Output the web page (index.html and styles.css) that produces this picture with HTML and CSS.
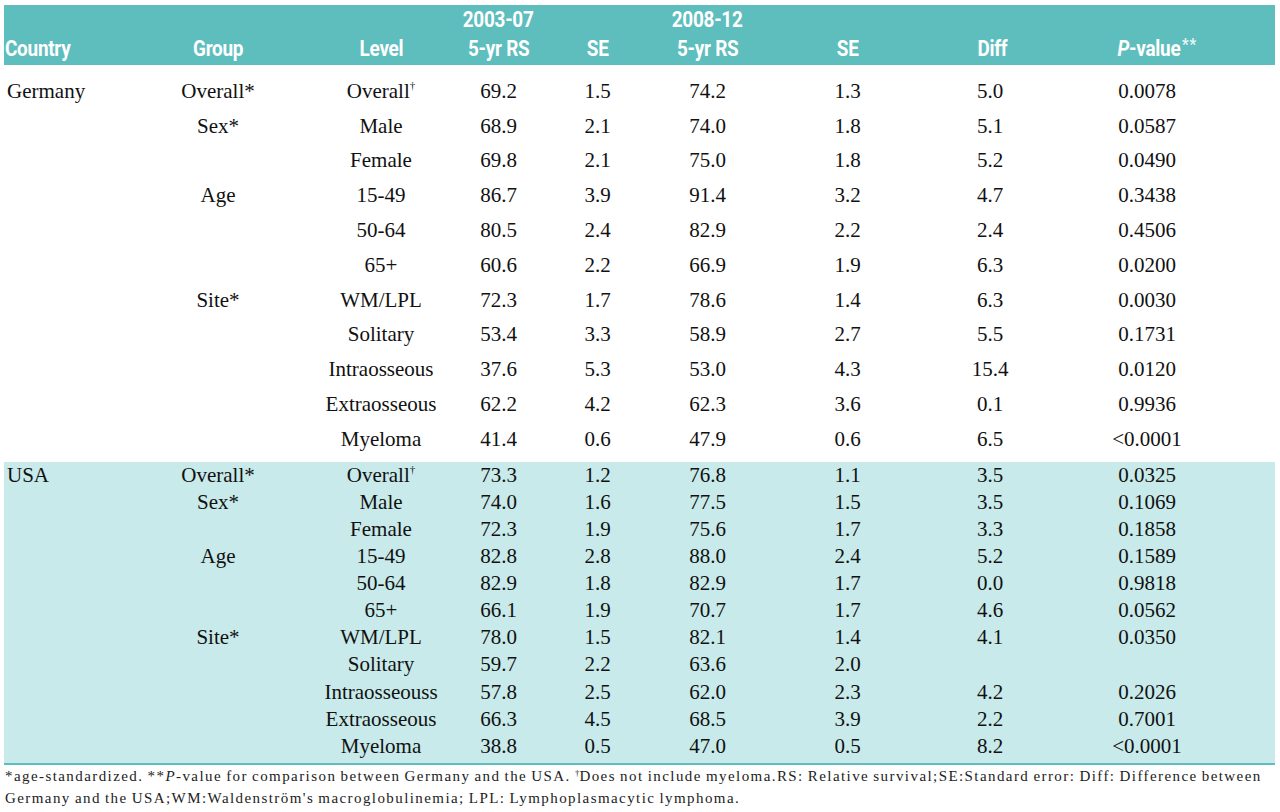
FILE: index.html
```html
<!DOCTYPE html>
<html lang="en">
<head>
<meta charset="utf-8">
<title>Survival table</title>
<link rel="stylesheet" href="styles.css">
</head>
<body>
<div class="tbl">
  <div class="head">
    <div class="row">
      <div class="c country"><span class="l2">Country</span></div>
      <div class="c group"><span class="l2">Group</span></div>
      <div class="c level"><span class="l2">Level</span></div>
      <div class="c rs1"><span>2003-07</span><span>5-yr RS</span></div>
      <div class="c se1"><span class="l2">SE</span></div>
      <div class="c rs2"><span>2008-12</span><span>5-yr RS</span></div>
      <div class="c se2"><span class="l2">SE</span></div>
      <div class="c diff"><span class="l2">Diff</span></div>
      <div class="c pv"><span class="l2"><i>P</i>-value<sup class="ast">**</sup></span></div>
    </div>
  </div>

  <div class="sec de">
    <div class="row"><div class="c country">Germany</div><div class="c group">Overall*</div><div class="c level">Overall<sup>†</sup></div><div class="c rs1">69.2</div><div class="c se1">1.5</div><div class="c rs2">74.2</div><div class="c se2">1.3</div><div class="c diff">5.0</div><div class="c pv">0.0078</div></div>
    <div class="row"><div class="c country"></div><div class="c group">Sex*</div><div class="c level">Male</div><div class="c rs1">68.9</div><div class="c se1">2.1</div><div class="c rs2">74.0</div><div class="c se2">1.8</div><div class="c diff">5.1</div><div class="c pv">0.0587</div></div>
    <div class="row"><div class="c country"></div><div class="c group"></div><div class="c level">Female</div><div class="c rs1">69.8</div><div class="c se1">2.1</div><div class="c rs2">75.0</div><div class="c se2">1.8</div><div class="c diff">5.2</div><div class="c pv">0.0490</div></div>
    <div class="row"><div class="c country"></div><div class="c group">Age</div><div class="c level">15-49</div><div class="c rs1">86.7</div><div class="c se1">3.9</div><div class="c rs2">91.4</div><div class="c se2">3.2</div><div class="c diff">4.7</div><div class="c pv">0.3438</div></div>
    <div class="row"><div class="c country"></div><div class="c group"></div><div class="c level">50-64</div><div class="c rs1">80.5</div><div class="c se1">2.4</div><div class="c rs2">82.9</div><div class="c se2">2.2</div><div class="c diff">2.4</div><div class="c pv">0.4506</div></div>
    <div class="row"><div class="c country"></div><div class="c group"></div><div class="c level">65+</div><div class="c rs1">60.6</div><div class="c se1">2.2</div><div class="c rs2">66.9</div><div class="c se2">1.9</div><div class="c diff">6.3</div><div class="c pv">0.0200</div></div>
    <div class="row"><div class="c country"></div><div class="c group">Site*</div><div class="c level">WM/LPL</div><div class="c rs1">72.3</div><div class="c se1">1.7</div><div class="c rs2">78.6</div><div class="c se2">1.4</div><div class="c diff">6.3</div><div class="c pv">0.0030</div></div>
    <div class="row"><div class="c country"></div><div class="c group"></div><div class="c level">Solitary</div><div class="c rs1">53.4</div><div class="c se1">3.3</div><div class="c rs2">58.9</div><div class="c se2">2.7</div><div class="c diff">5.5</div><div class="c pv">0.1731</div></div>
    <div class="row"><div class="c country"></div><div class="c group"></div><div class="c level">Intraosseous</div><div class="c rs1">37.6</div><div class="c se1">5.3</div><div class="c rs2">53.0</div><div class="c se2">4.3</div><div class="c diff">15.4</div><div class="c pv">0.0120</div></div>
    <div class="row"><div class="c country"></div><div class="c group"></div><div class="c level">Extraosseous</div><div class="c rs1">62.2</div><div class="c se1">4.2</div><div class="c rs2">62.3</div><div class="c se2">3.6</div><div class="c diff">0.1</div><div class="c pv">0.9936</div></div>
    <div class="row"><div class="c country"></div><div class="c group"></div><div class="c level">Myeloma</div><div class="c rs1">41.4</div><div class="c se1">0.6</div><div class="c rs2">47.9</div><div class="c se2">0.6</div><div class="c diff">6.5</div><div class="c pv">&lt;0.0001</div></div>
  </div>

  <div class="sec us">
    <div class="row"><div class="c country">USA</div><div class="c group">Overall*</div><div class="c level">Overall<sup>†</sup></div><div class="c rs1">73.3</div><div class="c se1">1.2</div><div class="c rs2">76.8</div><div class="c se2">1.1</div><div class="c diff">3.5</div><div class="c pv">0.0325</div></div>
    <div class="row"><div class="c country"></div><div class="c group">Sex*</div><div class="c level">Male</div><div class="c rs1">74.0</div><div class="c se1">1.6</div><div class="c rs2">77.5</div><div class="c se2">1.5</div><div class="c diff">3.5</div><div class="c pv">0.1069</div></div>
    <div class="row"><div class="c country"></div><div class="c group"></div><div class="c level">Female</div><div class="c rs1">72.3</div><div class="c se1">1.9</div><div class="c rs2">75.6</div><div class="c se2">1.7</div><div class="c diff">3.3</div><div class="c pv">0.1858</div></div>
    <div class="row"><div class="c country"></div><div class="c group">Age</div><div class="c level">15-49</div><div class="c rs1">82.8</div><div class="c se1">2.8</div><div class="c rs2">88.0</div><div class="c se2">2.4</div><div class="c diff">5.2</div><div class="c pv">0.1589</div></div>
    <div class="row"><div class="c country"></div><div class="c group"></div><div class="c level">50-64</div><div class="c rs1">82.9</div><div class="c se1">1.8</div><div class="c rs2">82.9</div><div class="c se2">1.7</div><div class="c diff">0.0</div><div class="c pv">0.9818</div></div>
    <div class="row"><div class="c country"></div><div class="c group"></div><div class="c level">65+</div><div class="c rs1">66.1</div><div class="c se1">1.9</div><div class="c rs2">70.7</div><div class="c se2">1.7</div><div class="c diff">4.6</div><div class="c pv">0.0562</div></div>
    <div class="row"><div class="c country"></div><div class="c group">Site*</div><div class="c level">WM/LPL</div><div class="c rs1">78.0</div><div class="c se1">1.5</div><div class="c rs2">82.1</div><div class="c se2">1.4</div><div class="c diff">4.1</div><div class="c pv">0.0350</div></div>
    <div class="row"><div class="c country"></div><div class="c group"></div><div class="c level">Solitary</div><div class="c rs1">59.7</div><div class="c se1">2.2</div><div class="c rs2">63.6</div><div class="c se2">2.0</div><div class="c diff"></div><div class="c pv"></div></div>
    <div class="row"><div class="c country"></div><div class="c group"></div><div class="c level">Intraosseouss</div><div class="c rs1">57.8</div><div class="c se1">2.5</div><div class="c rs2">62.0</div><div class="c se2">2.3</div><div class="c diff">4.2</div><div class="c pv">0.2026</div></div>
    <div class="row"><div class="c country"></div><div class="c group"></div><div class="c level">Extraosseous</div><div class="c rs1">66.3</div><div class="c se1">4.5</div><div class="c rs2">68.5</div><div class="c se2">3.9</div><div class="c diff">2.2</div><div class="c pv">0.7001</div></div>
    <div class="row"><div class="c country"></div><div class="c group"></div><div class="c level">Myeloma</div><div class="c rs1">38.8</div><div class="c se1">0.5</div><div class="c rs2">47.0</div><div class="c se2">0.5</div><div class="c diff">8.2</div><div class="c pv">&lt;0.0001</div></div>
  </div>

  <div class="foot">*age-standardized. **<i>P</i>-value for comparison between Germany and the USA. <sup>†</sup>Does not include myeloma.RS: Relative survival;SE:Standard error: Diff: Difference between<br>Germany and the USA;WM:Waldenström's macroglobulinemia; LPL: Lymphoplasmacytic lymphoma.</div>
</div>
</body>
</html>
```
FILE: styles.css
```css
html, body {
  margin: 0;
  padding: 0;
  background: #ffffff;
}

.tbl {
  width: 1271px;
  margin: 5px 0 0 4px;
  font-family: "Liberation Serif", "Times New Roman", serif;
  color: #111111;
}

.row {
  display: grid;
  grid-template-columns: 146px 140px 150px 115px 85px 135px 145px 140px 215px;
  align-items: center;
}

.c {
  text-align: center;
  white-space: nowrap;
}

.c.country { text-align: left; padding-left: 3px; }
.c.group { padding-right: 4px; }
.c.level { padding-left: 32px; }
.c.rs1 { padding-left: 2px; }
.c.pv { padding-right: 41px; }

/* Header band */
.head {
  background: #5ebdbd;
  height: 60px;
}
.head .row {
  height: 60px;
  align-items: stretch;
}
.head .c {
  display: flex;
  flex-direction: column;
  justify-content: flex-end;
  align-items: center;
  padding-bottom: 3px;
  font-family: Roboto, "Liberation Sans", sans-serif;
  font-weight: bold;
  font-size: 22px;
  line-height: 29px;
  color: #ffffff;
  letter-spacing: -0.3px;
}
.head .c span {
  display: block;
  transform: scaleX(0.86);
}
.head .c.country { align-items: flex-start; padding-left: 1px; }
.head .c.country span { transform-origin: left center; }
.head .c.pv { padding-right: 21px; }
.head .c.diff { padding-left: 4px; }
.head .ast {
  font-size: 17px;
  vertical-align: 6px;
  line-height: 0;
  color: #e9f7f7;
  margin-left: 2px;
  letter-spacing: 1px;
}

/* Body sections */
.sec {
  font-size: 21px;
}
.sec .row {
  height: 34.8px;
}
.sec.de {
  padding: 9px 0 5px;
}
.sec.us {
  background: #c8eaea;
  padding: 0 0 3px;
  border-bottom: 2px solid #5ebdbd;
}
.sec.us .row {
  height: 27.1px;
}

.sec sup {
  font-size: 11px;
  vertical-align: 9px;
  line-height: 0;
}

/* Footnote */
.foot {
  font-family: "Liberation Serif", "Times New Roman", serif;
  font-size: 15px;
  line-height: 22px;
  letter-spacing: 1.42px;
  word-spacing: -1px;
  color: #222222;
  padding: 0 0 0 1px;
}
.foot sup {
  font-size: 9px;
  vertical-align: 5px;
  line-height: 0;
  letter-spacing: 0;
}
```
